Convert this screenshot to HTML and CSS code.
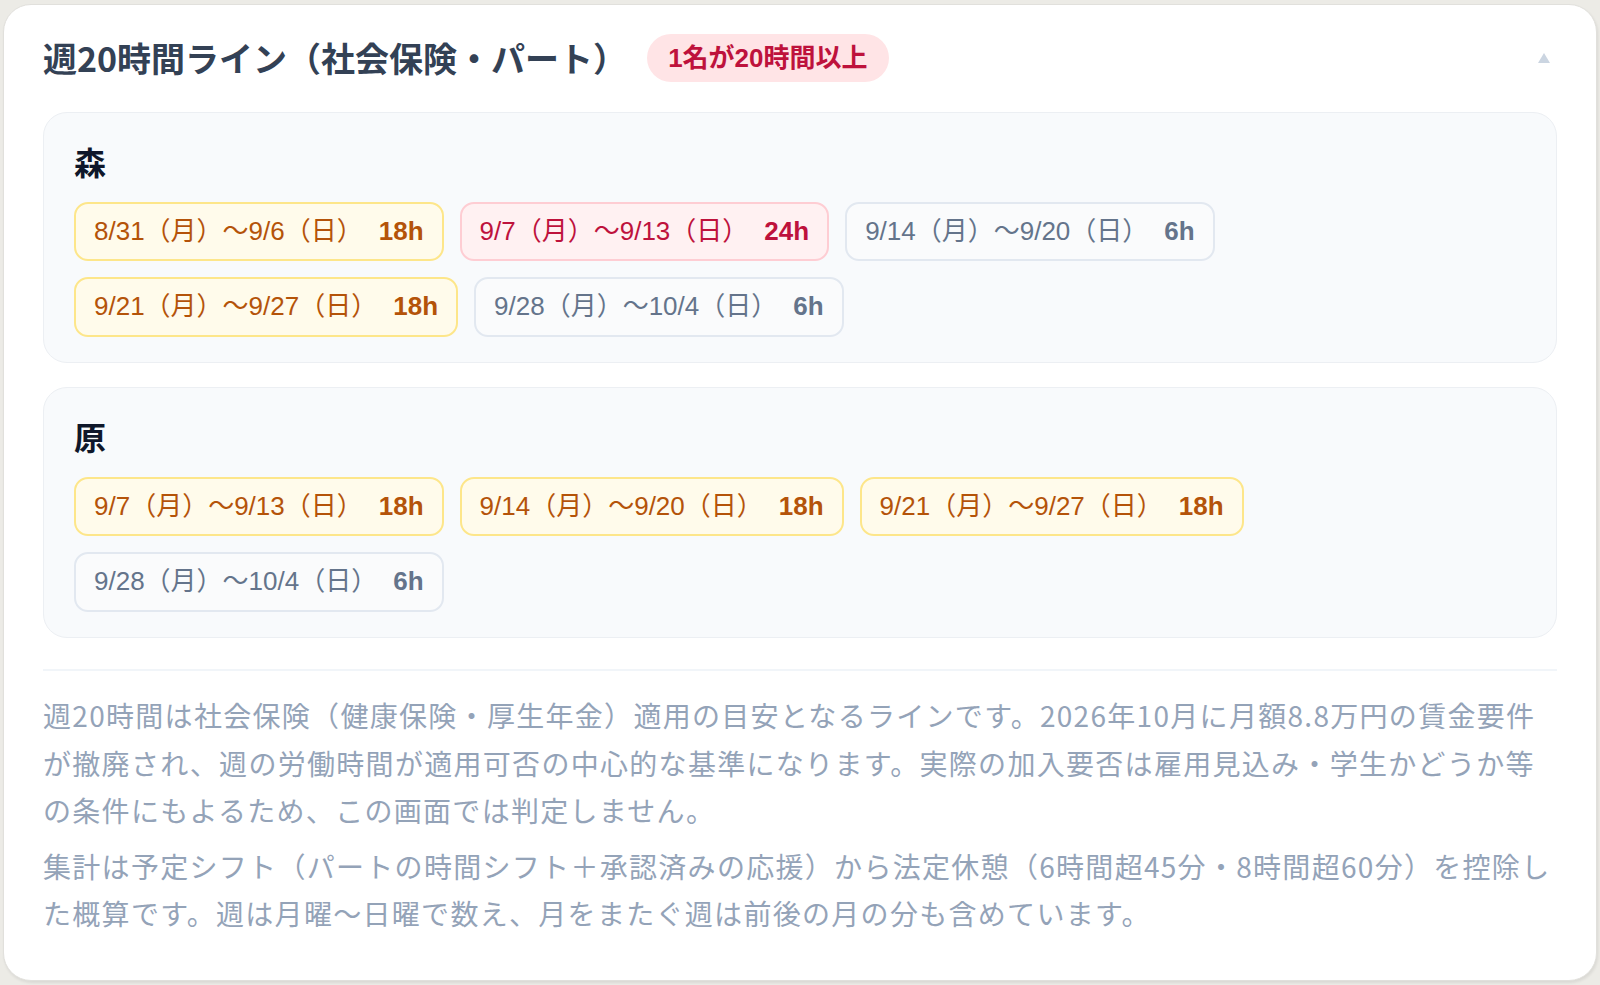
FILE: index.html
```html
<!DOCTYPE html>
<html lang="ja">
<head>
    <meta charset="UTF-8">
    <meta name="viewport" content="width=device-width, initial-scale=1.0">
    <title>週20時間ライン</title>
    <link rel="stylesheet" href="styles.css">
</head>
<body>
    <section class="card">
        <header class="card-head">
            <h2 class="card-title">週20時間ライン（社会保険・パート）</h2>
            <span class="badge">1名が20時間以上</span>
            <button class="toggle" aria-label="閉じる">
                <svg width="12" height="10" viewBox="0 0 12 10"><path d="M6 0L12 10H0Z" fill="#cbd5e1"/></svg>
            </button>
        </header>

        <div class="staff-list">
            <div class="staff">
                <h3 class="staff-name">森</h3>
                <ul class="week-list">
                    <li class="week week--warn">8/31（月）〜9/6（日）<b class="week-hours">18h</b></li>
                    <li class="week week--over">9/7（月）〜9/13（日）<b class="week-hours">24h</b></li>
                    <li class="week week--ok">9/14（月）〜9/20（日）<b class="week-hours">6h</b></li>
                    <li class="week week--warn">9/21（月）〜9/27（日）<b class="week-hours">18h</b></li>
                    <li class="week week--ok">9/28（月）〜10/4（日）<b class="week-hours">6h</b></li>
                </ul>
            </div>

            <div class="staff">
                <h3 class="staff-name">原</h3>
                <ul class="week-list">
                    <li class="week week--warn">9/7（月）〜9/13（日）<b class="week-hours">18h</b></li>
                    <li class="week week--warn">9/14（月）〜9/20（日）<b class="week-hours">18h</b></li>
                    <li class="week week--warn">9/21（月）〜9/27（日）<b class="week-hours">18h</b></li>
                    <li class="week week--ok">9/28（月）〜10/4（日）<b class="week-hours">6h</b></li>
                </ul>
            </div>
        </div>

        <hr class="divider">

        <div class="note">
            <p>週20時間は社会保険（健康保険・厚生年金）適用の目安となるラインです。2026年10月に月額8.8万円の賃金要件が撤廃され、週の労働時間が適用可否の中心的な基準になります。実際の加入要否は雇用見込み・学生かどうか等の条件にもよるため、この画面では判定しません。</p>
            <p>集計は予定シフト（パートの時間シフト＋承認済みの応援）から法定休憩（6時間超45分・8時間超60分）を控除した概算です。週は月曜〜日曜で数え、月をまたぐ週は前後の月の分も含めています。</p>
        </div>
    </section>
</body>
</html>
```

FILE: styles.css
```css
body {
    margin: 0;
    padding: 4px 3px 5px;
    background-color: #ecebe6;
    font-family: "Noto Sans CJK JP", sans-serif;
}

.card {
    background-color: #fff;
    border: 1px solid #e1e0dc;
    border-radius: 28px;
    padding: 29px 39px 42px;
    box-shadow: 1px 2px 3px rgba(0, 0, 0, 0.08);
}

/* header: title, count badge, collapse arrow */
.card-head {
    display: flex;
    align-items: center;
    gap: 20px;
    height: 48px;
    margin-bottom: 30px;
}

.card-title {
    margin: 0;
    font-size: 34px;
    line-height: 1.2;
    font-weight: 700;
    color: #334155;
}

.badge {
    height: 48px;
    line-height: 48px;
    padding: 0 21px;
    border-radius: 24px;
    background-color: #ffe4e6;
    color: #be123c;
    font-family: "Liberation Sans", "Noto Sans CJK JP", sans-serif;
    font-size: 26px;
    font-weight: 700;
}

.toggle {
    margin-left: auto;
    margin-right: 7px;
    padding: 0;
    border: none;
    background: none;
    line-height: 0;
    cursor: pointer;
}

/* one box per staff member */
.staff-list {
    display: flex;
    flex-direction: column;
    gap: 24px;
}

.staff {
    background-color: #f8fafc;
    border: 1px solid #eceff3;
    border-radius: 24px;
    padding: 26px 30px 25px;
}

.staff-name {
    margin: 0 0 18px;
    font-size: 32px;
    line-height: 1.4;
    font-weight: 700;
    color: #0f172a;
}

.week-list {
    list-style: none;
    margin: 0;
    padding: 0;
    display: flex;
    flex-wrap: wrap;
    gap: 16px;
}

.week {
    padding: 7px 18px;
    border: 2px solid;
    border-radius: 14px;
    font-family: "Liberation Sans", "Noto Sans CJK JP", sans-serif;
    font-size: 26px;
    line-height: 1.6;
    white-space: nowrap;
}

.week-hours {
    margin-left: 16px;
    font-weight: 700;
}

.week--warn {
    background-color: #fffbeb;
    border-color: #fde68a;
    color: #b45309;
}

.week--over {
    background-color: #fff1f2;
    border-color: #fecdd3;
    color: #be123c;
}

.week--ok {
    background-color: #fafbfc;
    border-color: #e2e8f0;
    color: #64748b;
}

.divider {
    border: none;
    border-top: 2px solid #f1f5f9;
    margin: 31px 0 21px;
}

.note p {
    margin: 0;
    font-size: 28px;
    line-height: 1.7;
    letter-spacing: 1.3px;
    color: #94a3b8;
}

.note p + p {
    margin-top: 8px;
}
```
